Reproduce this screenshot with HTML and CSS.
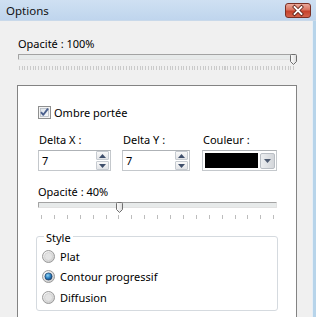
FILE: index.html
```html
<!DOCTYPE html>
<html lang="fr">
<head>
<meta charset="utf-8">
<title>Options</title>
<link rel="stylesheet" href="styles.css">
</head>
<body>
<div class="window">
  <div class="titlebar">
    <span class="title">Options</span>
    <span class="close">
      <svg width="26" height="15" viewBox="0 0 26 15">
        <path d="M9.5 4 L16.5 11 M16.5 4 L9.5 11" stroke="#5a1d14" stroke-width="3.4" stroke-linecap="square"/>
        <path d="M9.5 4 L16.5 11 M16.5 4 L9.5 11" stroke="#ffffff" stroke-width="1.8" stroke-linecap="square"/>
      </svg>
    </span>
  </div>
  <div class="client">
    <div class="label top-label">Opacité : 100%</div>
    <div class="slider slider-main">
      <div class="track"></div>
      <div class="ticks ticks-fine"></div>
      <div class="thumb" style="left:273px">
        <svg width="7" height="11" viewBox="0 0 7 11"><defs><linearGradient id="tg1" x1="0" y1="0" x2="1" y2="0"><stop offset="0" stop-color="#fdfdfd"/><stop offset="1" stop-color="#dcdcdc"/></linearGradient></defs><path d="M0.5 1.5 Q0.5 0.5 1.5 0.5 H5.5 Q6.5 0.5 6.5 1.5 V7.5 L3.5 10.5 L0.5 7.5 Z" fill="url(#tg1)" stroke="#6f6f6f"/></svg>
      </div>
    </div>
    <div class="panel">
      <div class="check-row">
        <span class="checkbox">
          <svg width="13" height="13" viewBox="0 0 13 13"><defs><linearGradient id="cg" x1="0" y1="0" x2="1" y2="1"><stop offset="0" stop-color="#dde3ea"/><stop offset="1" stop-color="#f7f9fb"/></linearGradient></defs><rect x="0.5" y="0.5" width="12" height="12" fill="#f4f4f4" stroke="#8e8f8f"/><rect x="2.5" y="2.5" width="8" height="8" fill="url(#cg)" stroke="#b4bac2" stroke-width="0.8"/><path d="M3 6.2 L5.3 8.8 L10 2.6" fill="none" stroke="#4a5f8d" stroke-width="1.9" stroke-linejoin="round"/></svg>
        </span>
        <span>Ombre portée</span>
      </div>
      <div class="fields">
        <div class="field field-x">
          <div class="label">Delta X :</div>
          <div class="spin"><span class="val">7</span><span class="spin-btns"><span class="sb"><svg width="7" height="4" viewBox="0 0 7 4"><path d="M0 4 L3.5 0 L7 4 Z" fill="#3f4f6b"/></svg></span><span class="sb"><svg width="7" height="4" viewBox="0 0 7 4"><path d="M0 0 L3.5 4 L7 0 Z" fill="#3f4f6b"/></svg></span></span></div>
        </div>
        <div class="field field-y">
          <div class="label">Delta Y :</div>
          <div class="spin"><span class="val">7</span><span class="spin-btns"><span class="sb"><svg width="7" height="4" viewBox="0 0 7 4"><path d="M0 4 L3.5 0 L7 4 Z" fill="#3f4f6b"/></svg></span><span class="sb"><svg width="7" height="4" viewBox="0 0 7 4"><path d="M0 0 L3.5 4 L7 0 Z" fill="#3f4f6b"/></svg></span></span></div>
        </div>
        <div class="field field-c">
          <div class="label">Couleur :</div>
          <div class="combo"><span class="swatch"></span><span class="drop"><svg width="7" height="4" viewBox="0 0 7 4"><path d="M0 0 L3.5 4 L7 0 Z" fill="#4d5a70"/></svg></span></div>
        </div>
      </div>
      <div class="label op2">Opacité : 40%</div>
      <div class="slider slider-sub">
        <div class="track"></div>
        <div class="ticks ticks-coarse"></div>
        <div class="thumb" style="left:78px">
          <svg width="7" height="11" viewBox="0 0 7 11"><defs><linearGradient id="tg2" x1="0" y1="0" x2="1" y2="0"><stop offset="0" stop-color="#fdfdfd"/><stop offset="1" stop-color="#dcdcdc"/></linearGradient></defs><path d="M0.5 1.5 Q0.5 0.5 1.5 0.5 H5.5 Q6.5 0.5 6.5 1.5 V7.5 L3.5 10.5 L0.5 7.5 Z" fill="url(#tg2)" stroke="#6f6f6f"/></svg>
        </div>
      </div>
      <fieldset class="group">
        <legend>Style</legend>
        <div class="radio-row">
          <svg class="radio" width="13" height="13" viewBox="0 0 13 13"><defs><radialGradient id="rg0" cx="0.35" cy="0.3" r="0.8"><stop offset="0" stop-color="#ffffff"/><stop offset="1" stop-color="#c9c9c9"/></radialGradient></defs><circle cx="6.5" cy="6.5" r="6" fill="url(#rg0)" stroke="#9a9a9a"/><circle cx="6.5" cy="6.5" r="4" fill="#e4e4e4" stroke="#cfcfcf" stroke-width="0.8"/></svg>
          <span>Plat</span>
        </div>
        <div class="radio-row">
          <svg class="radio" width="13" height="13" viewBox="0 0 13 13"><defs><radialGradient id="rg1" cx="0.35" cy="0.3" r="0.8"><stop offset="0" stop-color="#ffffff"/><stop offset="1" stop-color="#c9c9c9"/></radialGradient><radialGradient id="rd" cx="0.4" cy="0.35" r="0.7"><stop offset="0" stop-color="#8fd3f5"/><stop offset="0.55" stop-color="#2a7fc0"/><stop offset="1" stop-color="#143e6e"/></radialGradient></defs><circle cx="6.5" cy="6.5" r="6" fill="url(#rg1)" stroke="#9a9a9a"/><circle cx="6.5" cy="6.5" r="3.6" fill="url(#rd)" stroke="#1f3f66" stroke-width="0.7"/></svg>
          <span>Contour progressif</span>
        </div>
        <div class="radio-row">
          <svg class="radio" width="13" height="13" viewBox="0 0 13 13"><defs><radialGradient id="rg2" cx="0.35" cy="0.3" r="0.8"><stop offset="0" stop-color="#ffffff"/><stop offset="1" stop-color="#c9c9c9"/></radialGradient></defs><circle cx="6.5" cy="6.5" r="6" fill="url(#rg2)" stroke="#9a9a9a"/><circle cx="6.5" cy="6.5" r="4" fill="#e4e4e4" stroke="#cfcfcf" stroke-width="0.8"/></svg>
          <span>Diffusion</span>
        </div>
      </fieldset>
    </div>
  </div>
</div>
</body>
</html>
```
FILE: styles.css
```css
* { box-sizing: border-box; }
html, body { margin: 0; padding: 0; background: #f0f0f0; }
body {
  font-family: "Noto Sans", "Open Sans", sans-serif;
  font-size: 11px;
  line-height: 15px;
  color: #000;
}
.window {
  width: 316px;
  height: 317px;
  overflow: hidden;
  display: flex;
  flex-direction: column;
  background: #f0f0f0;
}
.titlebar {
  height: 21px;
  flex: none;
  display: flex;
  align-items: center;
  padding-left: 6px;
  background: linear-gradient(#cfe0f2, #bfd5ed);
  border-bottom: 1px solid #c9d9ea;
}
.title {
  font-size: 11.5px;
  color: #111;
  margin-top: 1px;
}
.close {
  margin-left: auto;
  margin-right: 5px;
  width: 26px;
  height: 15px;
  border: 1px solid #7a2f24;
  border-radius: 3px;
  background: linear-gradient(#eaa99b 0%, #d9735f 45%, #c5412b 55%, #d4634c 100%);
  display: flex;
  align-items: center;
  justify-content: center;
  margin-top: 1px;
}
.close svg { display: block; margin: -1px; }
.client {
  flex: 1;
  padding: 0 16px 0 17px;
  border-right: 3px solid #b7d4ea;
  box-shadow: inset -1px 0 0 #e6eef6;
}
.label { line-height: 15px; white-space: nowrap; }
.top-label { margin-top: 15px; margin-left: 1px; }
.slider { position: relative; }
.slider-main { margin-top: 3px; padding: 0 3px 0 1px; }
.track {
  height: 6px;
  margin-top: 2px;
  border: 1px solid;
  border-color: #a3a3a3 #e2e2e2 #e2e2e2 #a3a3a3;
  border-radius: 1px;
  background: #e7eaea;
}
.ticks { height: 4px; margin-top: 6px; }
.ticks-fine {
  margin-left: 1px;
  background: repeating-linear-gradient(90deg, #cacaca 0 1px, transparent 1px 2.74px);
}
.thumb { position: absolute; top: 0; width: 7px; height: 11px; }
.thumb svg { display: block; }
.panel {
  margin-top: 15px;
  flex: none;
  height: 260px;
  border: 1px solid #838383;
  background: #fff;
  padding: 19px 18px 0 20px;
}
.check-row { display: flex; align-items: center; height: 15px; }
.checkbox { width: 13px; height: 13px; margin-right: 3px; }
.checkbox svg { display: block; }
.fields { display: flex; margin-top: 12px; }
.field-x { width: 73px; }
.field-y { width: 68px; margin-left: 11px; }
.field-c { width: 75px; margin-left: 12px; }
.field .label { margin-left: 1px; }
.spin {
  margin-top: 3px;
  height: 21px;
  border: 1px solid #c4c8cc;
  border-top-color: #aeb2b6;
  display: flex;
  align-items: center;
  padding-left: 3px;
  background: #fff;
}
.val { flex: 1; }
.spin-btns {
  display: flex;
  flex-direction: column;
  gap: 1px;
  margin-right: 1px;
}
.sb {
  width: 13px;
  height: 9px;
  border: 1px solid #c6cbd1;
  border-radius: 1px;
  background: linear-gradient(#f9f9f9, #e2e4e7);
  display: flex;
  align-items: center;
  justify-content: center;
}
.sb svg { display: block; }
.combo {
  margin-top: 3px;
  height: 21px;
  border: 1px solid #c4c8cc;
  border-top-color: #aeb2b6;
  background: #fff;
  display: flex;
  align-items: stretch;
  padding: 2px 1px 1px 2px;
  gap: 2px;
}
.swatch { flex: 1; background: #000; margin-bottom: 1px; }
.drop {
  width: 15px;
  border: 1px solid #b9bec4;
  border-radius: 2px;
  background: linear-gradient(90deg, #eceef0, #d3d6da);
  display: flex;
  align-items: center;
  justify-content: center;
}
.drop svg { display: block; }
.op2 { margin-top: 13px; }
.slider-sub { margin-top: 2px; }
.slider-sub .track { margin-top: 3px; height: 6px; width: 239px; }
.slider-sub .ticks { margin-top: 7px; }
.ticks-coarse {
  margin-left: 3px;
  width: 235px;
  background: repeating-linear-gradient(90deg, #bdbdbd 0 1px, transparent 1px 12.9px);
}
.group {
  margin: 10px 0 0 -2px;
  width: 242px;
  border: 1px solid #d5dadf;
  border-radius: 3px;
  padding: 3px 0 2px 5px;
  min-width: 0;
}
.group legend {
  padding: 3px 2px 0 2px;
  margin-left: 2px;
  line-height: 11px;
}
.radio-row {
  display: flex;
  align-items: center;
  height: 20.5px;
}
.radio { display: block; margin-right: 5px; flex: none; }
```
